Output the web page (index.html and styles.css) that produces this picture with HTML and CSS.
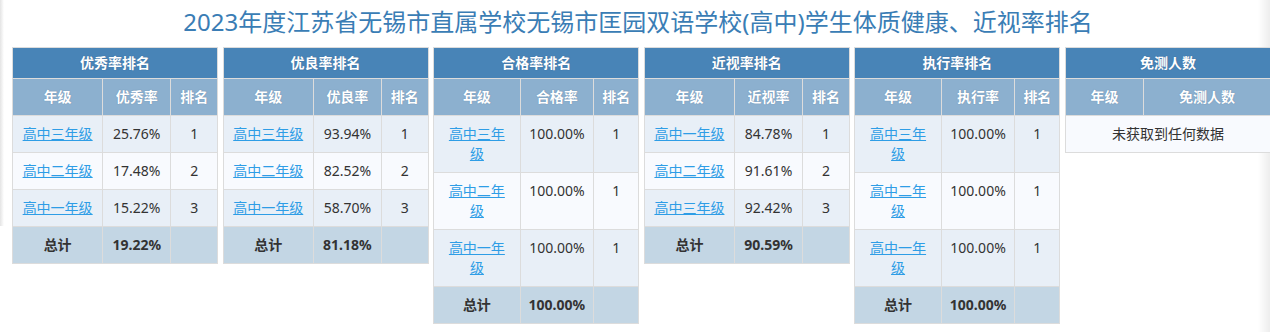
FILE: index.html
```html
<!DOCTYPE html>
<html lang="zh-CN">
<head>
<meta charset="utf-8">
<title>学生体质健康、近视率排名</title>
<link rel="stylesheet" href="styles.css">
</head>
<body>
<h1 class="title">2023年度江苏省无锡市直属学校无锡市匡园双语学校(高中)学生体质健康、近视率排名</h1>
<div class="board">
  <div class="panel">
    <table class="rank">
      <thead>
        <tr class="h1"><th colspan="3">优秀率排名</th></tr>
        <tr class="h2"><th>年级</th><th>优秀率</th><th>排名</th></tr>
      </thead>
      <tbody>
        <tr class="odd"><td><a href="#">高中三年级</a></td><td>25.76%</td><td>1</td></tr>
        <tr class="even"><td><a href="#">高中二年级</a></td><td>17.48%</td><td>2</td></tr>
        <tr class="odd"><td><a href="#">高中一年级</a></td><td>15.22%</td><td>3</td></tr>
        <tr class="total"><td>总计</td><td>19.22%</td><td></td></tr>
      </tbody>
    </table>
  </div>
  <div class="panel">
    <table class="rank">
      <thead>
        <tr class="h1"><th colspan="3">优良率排名</th></tr>
        <tr class="h2"><th>年级</th><th>优良率</th><th>排名</th></tr>
      </thead>
      <tbody>
        <tr class="odd"><td><a href="#">高中三年级</a></td><td>93.94%</td><td>1</td></tr>
        <tr class="even"><td><a href="#">高中二年级</a></td><td>82.52%</td><td>2</td></tr>
        <tr class="odd"><td><a href="#">高中一年级</a></td><td>58.70%</td><td>3</td></tr>
        <tr class="total"><td>总计</td><td>81.18%</td><td></td></tr>
      </tbody>
    </table>
  </div>
  <div class="panel">
    <table class="rank">
      <thead>
        <tr class="h1"><th colspan="3">合格率排名</th></tr>
        <tr class="h2"><th>年级</th><th>合格率</th><th>排名</th></tr>
      </thead>
      <tbody>
        <tr class="odd"><td><a href="#">高中三年级</a></td><td>100.00%</td><td>1</td></tr>
        <tr class="even"><td><a href="#">高中二年级</a></td><td>100.00%</td><td>1</td></tr>
        <tr class="odd"><td><a href="#">高中一年级</a></td><td>100.00%</td><td>1</td></tr>
        <tr class="total"><td>总计</td><td>100.00%</td><td></td></tr>
      </tbody>
    </table>
  </div>
  <div class="panel">
    <table class="rank">
      <thead>
        <tr class="h1"><th colspan="3">近视率排名</th></tr>
        <tr class="h2"><th>年级</th><th>近视率</th><th>排名</th></tr>
      </thead>
      <tbody>
        <tr class="odd"><td><a href="#">高中一年级</a></td><td>84.78%</td><td>1</td></tr>
        <tr class="even"><td><a href="#">高中二年级</a></td><td>91.61%</td><td>2</td></tr>
        <tr class="odd"><td><a href="#">高中三年级</a></td><td>92.42%</td><td>3</td></tr>
        <tr class="total"><td>总计</td><td>90.59%</td><td></td></tr>
      </tbody>
    </table>
  </div>
  <div class="panel">
    <table class="rank">
      <thead>
        <tr class="h1"><th colspan="3">执行率排名</th></tr>
        <tr class="h2"><th>年级</th><th>执行率</th><th>排名</th></tr>
      </thead>
      <tbody>
        <tr class="odd"><td><a href="#">高中三年级</a></td><td>100.00%</td><td>1</td></tr>
        <tr class="even"><td><a href="#">高中二年级</a></td><td>100.00%</td><td>1</td></tr>
        <tr class="odd"><td><a href="#">高中一年级</a></td><td>100.00%</td><td>1</td></tr>
        <tr class="total"><td>总计</td><td>100.00%</td><td></td></tr>
      </tbody>
    </table>
  </div>
  <div class="panel">
    <table class="rank">
      <thead>
        <tr class="h1"><th colspan="2">免测人数</th></tr>
        <tr class="h2"><th class="grade-col">年级</th><th>免测人数</th></tr>
      </thead>
      <tbody>
        <tr class="even"><td colspan="2">未获取到任何数据</td></tr>
      </tbody>
    </table>
  </div>
</div>
</body>
</html>
```

FILE: styles.css
```css
html, body {
  margin: 0;
  padding: 0;
  overflow: hidden;
}

html {
  background: #fff;
}

body {
  width: 1270px;
  height: 332px;
  font-family: "Noto Sans", "Noto Sans CJK SC", sans-serif;
  font-size: 14px;
  line-height: 20px;
  color: #333;
  background:
    linear-gradient(to right, rgba(238,238,238,0), #ededed) right top / 12px 332px no-repeat,
    linear-gradient(to right, #e4e4e4, rgba(250,250,250,0)) left top / 4px 226px no-repeat,
    #fff;
}

.title {
  margin: 0 0 8px;
  padding-top: 5px;
  padding-left: 6px;
  font-size: 24px;
  line-height: 34px;
  font-weight: normal;
  text-align: center;
  color: #3a7db5;
}

.board {
  display: flex;
  gap: 4.6px;
  padding-left: 12px;
  align-items: flex-start;
}

.panel {
  flex: 0 0 206px;
  width: 206px;
}

.rank {
  width: 100%;
  border-collapse: collapse;
  border: 1px solid #dcdcdc;
  text-align: center;
}

.rank th,
.rank td {
  border: 1px solid #dcdcdc;
  padding: 8px;
  vertical-align: top;
}

.rank th {
  white-space: nowrap;
}

.rank .h1 th {
  background: #4884b7;
  color: #fff;
  font-weight: bold;
  padding: 5px 8px;
  text-shadow: 0 0 1px rgba(40, 70, 110, 0.5);
}

.rank .h2 th {
  background: #8cb0cf;
  color: #fff;
  font-weight: bold;
  text-shadow: 0 0 1px rgba(50, 80, 120, 0.5);
}

.rank .grade-col {
  width: 38%;
}

.rank .odd td {
  background: #e8eff7;
}

.rank .even td {
  background: #f8fafe;
}

.rank .total td {
  background: #c3d6e4;
  font-weight: bold;
}

.rank a {
  color: #2e9de6;
  text-decoration: underline;
}
```
